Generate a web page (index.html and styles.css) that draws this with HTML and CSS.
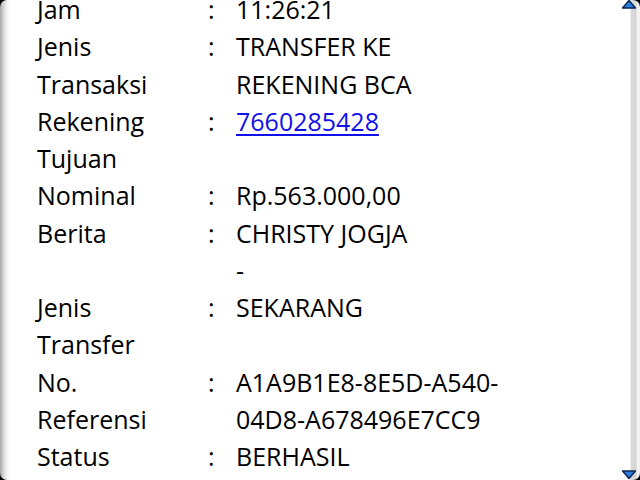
FILE: index.html
```html
<!DOCTYPE html>
<html>
<head>
<meta charset="utf-8">
<link rel="stylesheet" href="styles.css">
</head>
<body>
<div class="screen">
  <div class="rows">
    <div class="label">Jam</div><div class="colon">:</div><div class="value">11:26:21</div>
    <div class="label">Jenis<br>Transaksi</div><div class="colon">:</div><div class="value">TRANSFER KE<br>REKENING BCA</div>
    <div class="label">Rekening<br>Tujuan</div><div class="colon">:</div><div class="value"><a class="link" href="#">7660285428</a></div>
    <div class="label">Nominal</div><div class="colon">:</div><div class="value">Rp.563.000,00</div>
    <div class="label">Berita</div><div class="colon">:</div><div class="value">CHRISTY JOGJA<br>-</div>
    <div class="label">Jenis<br>Transfer</div><div class="colon">:</div><div class="value">SEKARANG</div>
    <div class="label">No.<br>Referensi</div><div class="colon">:</div><div class="value">A1A9B1E8-8E5D-A540-<br>04D8-A678496E7CC9</div>
    <div class="label">Status</div><div class="colon">:</div><div class="value">BERHASIL</div>
  </div>
  <svg class="arrow arrow-up" width="16" height="10" viewBox="0 0 16 10"><polygon points="1.5,9 8,1.5 14.5,9" fill="#2a7ee0" stroke="#0b2350" stroke-width="1.4" stroke-linejoin="round"/></svg>
  <svg class="arrow arrow-down" width="16" height="10" viewBox="0 0 16 10"><polygon points="1.5,1 8,8.5 14.5,1" fill="#2a7ee0" stroke="#0b2350" stroke-width="1.4" stroke-linejoin="round"/></svg>
</div>
</body>
</html>
```
FILE: styles.css
```css
html, body {
  margin: 0;
  padding: 0;
  background: #000;
}
body {
  width: 640px;
  height: 480px;
  overflow: hidden;
  font-family: "Open Sans", "DejaVu Sans", sans-serif;
}
.screen {
  position: relative;
  width: 640px;
  height: 480px;
  overflow: hidden;
  border-radius: 7px;
  background: linear-gradient(to right,
    #a8a8a8 0px, #d0d0d0 3px, #ececec 6px, #ffffff 9px,
    #ffffff 630px, #dadada 631px, #d4d4d4 636px, #f2f2f2 637px, #f2f2f2 640px);
}
.rows {
  display: grid;
  grid-template-columns: 171px 28px auto;
  margin: -9px 0 0 37px;
  font-size: 25px;
  line-height: 37.25px;
  color: #000;
  white-space: nowrap;
}
.link {
  color: #1010e8;
  text-decoration: underline;
  text-decoration-thickness: 2px;
  text-underline-offset: 3px;
}
.arrow {
  position: absolute;
  right: 3px;
}
.arrow-up {
  top: -1px;
}
.arrow-down {
  bottom: 0;
}
```
